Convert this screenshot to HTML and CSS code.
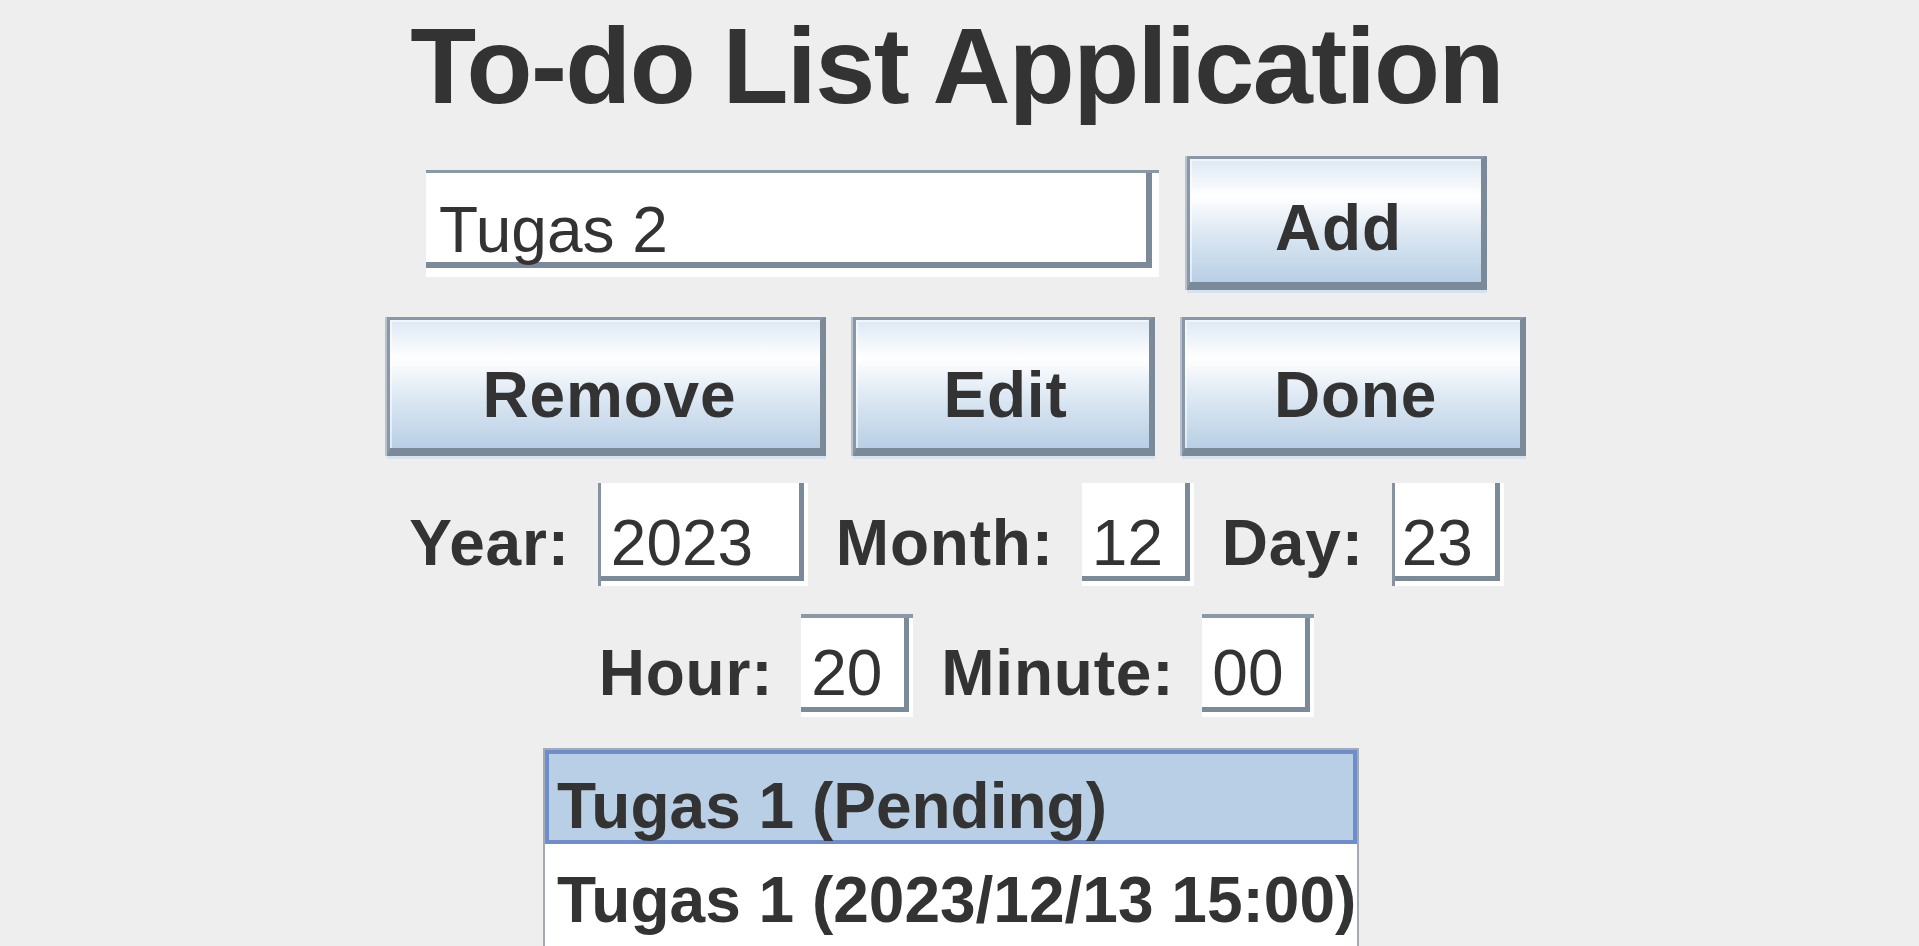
FILE: index.html
```html
<!DOCTYPE html>
<html lang="en">
<head>
<meta charset="utf-8">
<title>To-do List Application</title>
<link rel="stylesheet" href="styles.css">
</head>
<body>
<div class="app">
  <h1 class="title">To-do List Application</h1>

  <div class="row row-input">
    <div class="field field-main field-top">Tugas 2</div>
    <div class="btn btn-add">Add</div>
  </div>

  <div class="row row-actions">
    <div class="btn btn-action btn-remove">Remove</div>
    <div class="btn btn-action btn-edit">Edit</div>
    <div class="btn btn-action btn-done">Done</div>
  </div>

  <div class="row row-date">
    <span class="label">Year:</span>
    <div class="field field-sm field-year field-left">2023</div>
    <span class="label">Month:</span>
    <div class="field field-sm">12</div>
    <span class="label">Day:</span>
    <div class="field field-sm field-left">23</div>
  </div>

  <div class="row row-time">
    <span class="label">Hour:</span>
    <div class="field field-sm field-top">20</div>
    <span class="label">Minute:</span>
    <div class="field field-sm field-top">00</div>
  </div>

  <div class="row row-list">
    <div class="list">
      <div class="cell cell-selected">Tugas 1 (Pending)</div>
      <div class="cell">Tugas 1 (2023/12/13 15:00)</div>
    </div>
  </div>
</div>
</body>
</html>
```

FILE: styles.css
```css
html, body {
  margin: 0;
  padding: 0;
  height: 946px;
  overflow: hidden;
  background: #eeeeee;
}

.app {
  width: 1913px;
  font-family: "Liberation Sans", Arial, sans-serif;
  color: #333333;
}

.title {
  margin: 0;
  padding-top: 4px;
  height: 124px;
  line-height: 124px;
  font-size: 108px;
  font-weight: bold;
  letter-spacing: -1.6px;
  text-align: center;
}

.row {
  display: flex;
  justify-content: center;
  align-items: flex-start;
}

.row-input {
  margin-top: 28px;
  gap: 28px;
}

.row-actions {
  margin-top: 27px;
  gap: 27px;
}

.row-date {
  margin-top: 27px;
  gap: 28px;
}

.row-time {
  margin-top: 28px;
  gap: 28px;
}

.row-list {
  margin-top: 31px;
}

/* labels */
.label {
  font-size: 64px;
  font-weight: bold;
  letter-spacing: 0.8px;
  line-height: 74px;
  padding-top: 23px;
  white-space: nowrap;
}

.row-time .label {
  padding-top: 22px;
}

/* text fields */
.field {
  box-sizing: border-box;
  background: #ffffff;
  font-size: 64px;
  font-weight: normal;
  line-height: 74px;
  padding-top: 23px;
  white-space: nowrap;
}

.field-main {
  width: 733px;
  height: 107px;
  margin-top: 14px;
  padding-left: 13px;
  box-shadow:
    inset 0 3px 0 #8b98a5,
    inset -7px -9px 0 #ffffff,
    inset -13px -15px 0 #7a8a99;
}

.field-sm {
  width: 112px;
  height: 103px;
  padding-left: 10px;
  box-shadow:
    inset -4px -5px 0 #ffffff,
    inset -9px -10px 0 #7a8a99;
}

.row-time .field-sm {
  padding-top: 22px;
}

.field-year {
  width: 210px;
  padding-left: 13px;
}

.field-sm.field-top {
  box-shadow:
    inset 0 4px 0 #8b98a5,
    inset -4px -5px 0 #ffffff,
    inset -9px -10px 0 #7a8a99;
}

.field-sm.field-left {
  box-shadow:
    inset 3px 0 0 #8593a1,
    inset -4px -5px 0 #ffffff,
    inset -9px -10px 0 #7a8a99;
}

/* buttons */
.btn {
  box-sizing: border-box;
  border-top: 3px solid #8898a8;
  border-left: 3px solid #8898a8;
  border-right: 6px solid #7a8a99;
  border-bottom: 8px solid #7a8a99;
  background: linear-gradient(to bottom, #dde8f3 0%, #ffffff 30%, #dde8f3 60%, #b8cfe5 100%);
  box-shadow:
    inset 2px 2px 0 rgba(255, 255, 255, 0.55),
    -2px 0 0 #b8c2cc,
    0 3px 0 #d6e2ee;
  font-size: 64px;
  font-weight: bold;
  letter-spacing: 0.8px;
  line-height: 74px;
  text-align: center;
  padding-left: 6px;
  white-space: nowrap;
}

.btn-add {
  width: 300px;
  height: 134px;
  padding-top: 32px;
}

.btn-action {
  height: 139px;
  padding-top: 38px;
}

.btn-remove {
  width: 439px;
  padding-left: 9px;
}

.btn-edit {
  width: 302px;
}

.btn-done {
  width: 344px;
}

/* list */
.list {
  box-sizing: border-box;
  width: 816px;
  height: 220px;
  margin-right: 11px;
  background: #ffffff;
  border: 2px solid #a2abb5;
  border-bottom: 0;
  font-size: 64px;
  font-weight: bold;
  line-height: 74px;
}

.cell {
  box-sizing: border-box;
  height: 94px;
  padding-top: 19px;
  padding-left: 12px;
  white-space: nowrap;
}

.cell-selected {
  background: #b8cfe5;
  border: 4px solid #6f8ccb;
  padding-top: 15px;
  padding-left: 8px;
}
```
